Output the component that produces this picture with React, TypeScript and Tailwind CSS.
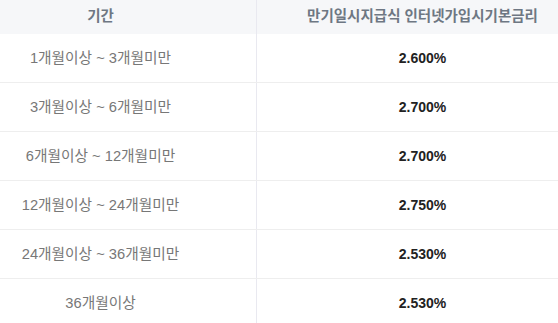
import React from "react";

const rows: [string, string][] = [
  ["1개월이상 ~ 3개월미만", "2.600%"],
  ["3개월이상 ~ 6개월미만", "2.700%"],
  ["6개월이상 ~ 12개월미만", "2.700%"],
  ["12개월이상 ~ 24개월미만", "2.750%"],
  ["24개월이상 ~ 36개월미만", "2.530%"],
  ["36개월이상", "2.530%"],
];

export default function App() {
  return (
    <div
      className="w-[558px] h-[323px] overflow-hidden bg-white text-[14px]"
      style={{ fontFamily: '"Liberation Sans", "Noto Sans CJK KR", sans-serif' }}
    >
      <div className="grid grid-cols-[257px_301px] h-[34px] bg-[#f6f7f9] text-[#6e7783] font-semibold text-[14.5px]">
        <div className="flex items-center justify-center pr-[55px] border-r border-[#e9e9f0]">기간</div>
        <div className="flex items-center justify-center pl-[30px] whitespace-nowrap">만기일시지급식 인터넷가입시기본금리</div>
      </div>
      {rows.map(([p, r], i) => (
        <div
          key={i}
          className={i === 0 ? "grid grid-cols-[257px_301px] h-[48px]" : "grid grid-cols-[257px_301px] h-[49px] border-t border-[#eeeeee]"}
        >
          <div className="flex items-center justify-center pr-[55px] border-r border-[#e9e9f0] text-[#777777] text-[14.7px]">{p}</div>
          <div className="flex items-center justify-center pl-[30px] font-bold text-[#222222]">{r}</div>
        </div>
      ))}
    </div>
  );
}
